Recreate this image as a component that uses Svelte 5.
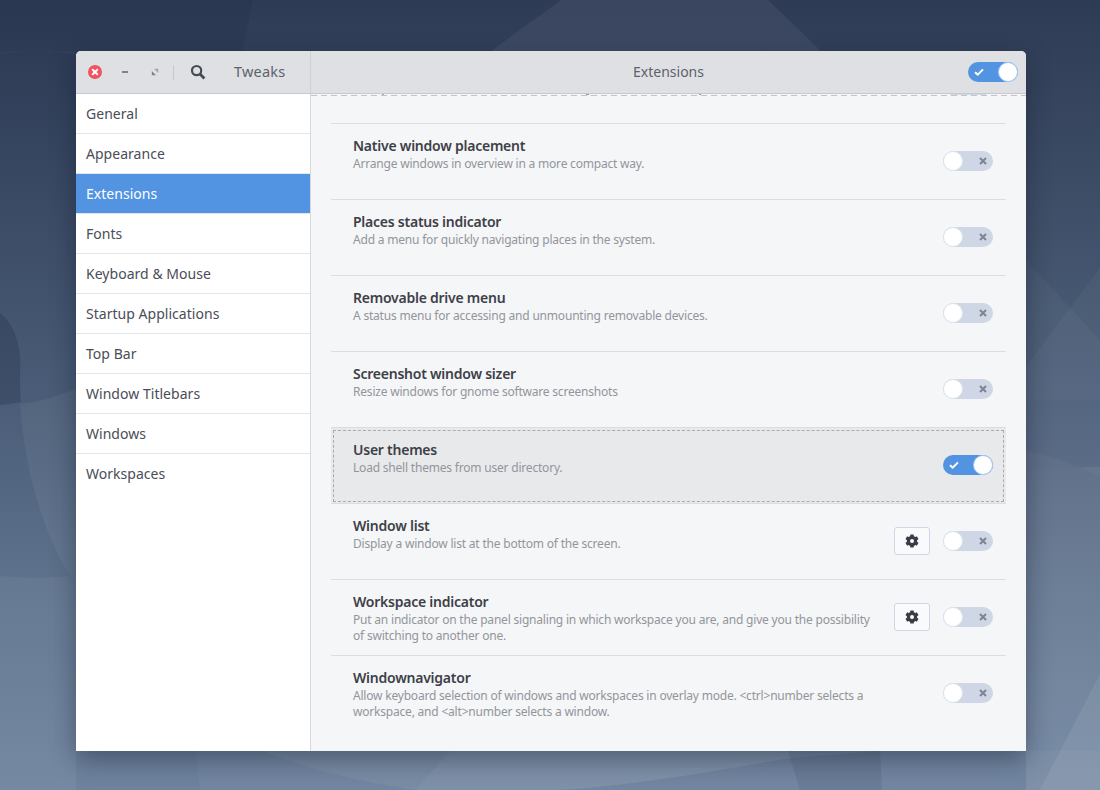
<script>
  const nav = ['General','Appearance','Extensions','Fonts','Keyboard & Mouse','Startup Applications','Top Bar','Window Titlebars','Windows','Workspaces'];
  const rows = [
    { t:'Native window placement', d:'Arrange windows in overview in a more compact way.' },
    { t:'Places status indicator', d:'Add a menu for quickly navigating places in the system.' },
    { t:'Removable drive menu', d:'A status menu for accessing and unmounting removable devices.' },
    { t:'Screenshot window sizer', d:'Resize windows for gnome software screenshots' },
    { t:'User themes', d:'Load shell themes from user directory.', on:true, focus:true },
    { t:'Window list', d:'Display a window list at the bottom of the screen.', gear:true },
    { t:'Workspace indicator', d:'Put an indicator on the panel signaling in which workspace you are, and give you the possibility of switching to another one.', gear:true },
    { t:'Windownavigator', d:'Allow keyboard selection of windows and workspaces in overlay mode. <ctrl>number selects a workspace, and <alt>number selects a window.', last:true }
  ];
</script>

{#snippet toggle(on)}
  <span class="switch" class:on>
    {#if on}
      <svg class="mark" width="10" height="8" viewBox="0 0 10 8"><path d="M1 4.200 3.700 6.600 9 1.400" fill="none" stroke="#fff" stroke-width="2"/></svg>
    {:else}
      <svg class="mark" width="8" height="8" viewBox="0 0 8 8"><path d="M1 1 7 7M7 1 1 7" fill="none" stroke="#7f8491" stroke-width="2"/></svg>
    {/if}
    <span class="knob"></span>
  </span>
{/snippet}

<div class="desktop">
  <svg class="wall" width="1100" height="790" viewBox="0 0 1100 790">
    <defs>
      <linearGradient id="bg" x1="0" y1="0" x2="0" y2="1">
        <stop offset="0" stop-color="#2a3751"/>
        <stop offset="0.5" stop-color="#4a5c77"/>
        <stop offset="0.75" stop-color="#5f738e"/>
        <stop offset="1" stop-color="#6f839e"/>
      </linearGradient>
    </defs>
    <rect width="1100" height="790" fill="url(#bg)"/>
    <!-- top facets -->
    <path d="M253 0 242 51 240 400H1100V0Z" fill="#fff" opacity=".025"/>
    <path d="M561 0H768L821 51H491Z" fill="#fff" opacity=".055"/>
    <path d="M0 55C20 50 50 50 76 55V51H0Z" fill="#fff" opacity=".02"/>
    <!-- left blob and curves -->
    <path d="M0 313C16 325 22 350 20 375C20 385 20 395 21 402C10 404 5 405 0 405Z" fill="#1f2c45" opacity=".28"/>
    <path d="M20 404C40 402 60 395 76 389V585C50 550 25 480 20 404Z" fill="#fff" opacity=".05"/>
    <path d="M0 576C30 578 50 578 68 576L76 585V790H0Z" fill="#fff" opacity=".05"/>
    <!-- right facets -->
    <path d="M1026 260 1100 340V790H1026Z" fill="#fff" opacity=".03"/>
    <path d="M1026 367 1100 268V790H1026Z" fill="#fff" opacity=".03"/>
    <path d="M1026 471C1050 468 1080 467 1100 467V790H1026Z" fill="#fff" opacity=".035"/>
    <path d="M1026 451C1055 456 1080 468 1100 476V467C1080 467 1050 468 1026 471Z" fill="#fff" opacity=".03"/>
    <path d="M1100 674 1040 790H1100Z" fill="#fff" opacity=".07"/>
    <!-- bottom facets -->
    <path d="M196 751 200 790H1100V751Z" fill="#fff" opacity=".03"/>
    <path d="M263 751C310 770 360 782 415 790L450 751Z" fill="#fff" opacity=".05"/>
    <path d="M450 751 415 790H560C640 785 720 770 790 758L788 751Z" fill="#fff" opacity=".09"/>
    <path d="M790 758 880 751 882 790H800Z" fill="#1f2c45" opacity=".1"/>
  </svg>

  <div class="window">
    <header>
      <div class="head-left">
        <span class="close">
          <svg width="8" height="8" viewBox="0 0 8 8"><path d="M1.200 1.200 6.800 6.800M6.800 1.200 1.200 6.800" stroke="#fff" stroke-width="2"/></svg>
        </span>
        <span class="min"></span>
        <svg class="max" width="8" height="8" viewBox="0 0 8 8"><path d="M3 .8H7.200V5Z" fill="#a2a5ac"/><path d="M.8 3V7.200H5Z" fill="#808389"/></svg>
        <span class="sep"></span>
        <svg class="search" width="16" height="16" viewBox="0 0 16 16"><circle cx="6.600" cy="6.600" r="4.600" fill="none" stroke="#474b55" stroke-width="2.200"/><path d="M10 10 14.400 14.400" stroke="#474b55" stroke-width="2.800"/></svg>
        <span class="app">Tweaks</span>
      </div>
      <div class="head-right">
        <span class="title">Extensions</span>
        <span class="head-toggle">{@render toggle(true)}</span>
      </div>
    </header>
    <div class="body">
      <nav>
        {#each nav as n, i}
          <div class="nav-item" class:active={n === 'Extensions'} class:end={i === nav.length - 1}>{n}</div>
        {/each}
      </nav>
      <main>
        <div class="dash"></div>
        <div class="list">
          {#each rows as r}
            <div class="row" class:focus={r.focus} class:last={r.last}>
              <div class="text">
                <div class="name">{r.t}</div>
                <div class="desc">{r.d}</div>
              </div>
              {#if r.gear}
                <span class="gear">
                  <svg width="14" height="14" viewBox="0 0 14 14">
                    <g fill="#3a3d46">
                      <circle cx="7" cy="7" r="5.200"/>
                      <rect x="5.200" y=".4" width="3.600" height="13.200" rx=".6"/>
                      <rect x="5.200" y=".4" width="3.600" height="13.200" rx=".6" transform="rotate(60 7 7)"/>
                      <rect x="5.200" y=".4" width="3.600" height="13.200" rx=".6" transform="rotate(120 7 7)"/>
                    </g>
                    <circle cx="7" cy="7" r="2" fill="#f9fafb"/>
                  </svg>
                </span>
              {/if}
              {@render toggle(r.on)}
            </div>
          {/each}
        </div>
      </main>
    </div>
  </div>
</div>

<style>
  :global(body) { margin: 0; }
  .desktop {
    position: relative;
    width: 1100px;
    height: 790px;
    overflow: hidden;
    padding: 51px 0 0 76px;
    box-sizing: border-box;
    font-family: "Noto Sans", "Open Sans", sans-serif;
  }
  .wall { position: absolute; inset: 0; }
  .window {
    position: relative;
    width: 950px;
    height: 700px;
    border-radius: 5px 5px 0 0;
    overflow: hidden;
    background: #f5f6f7;
    box-shadow: 0 8px 26px rgba(15, 24, 40, .42);
    display: flex;
    flex-direction: column;
  }
  header {
    height: 42px;
    flex: none;
    display: flex;
    background: #dfe0e4;
    border-bottom: 1px solid #c9cad0;
  }
  .head-left {
    width: 234px;
    flex: none;
    display: flex;
    align-items: center;
    border-right: 1px solid #cfd0d5;
  }
  .close {
    width: 14px; height: 14px;
    margin-left: 12px;
    border-radius: 50%;
    background: #f0535f;
    display: flex; align-items: center; justify-content: center;
  }
  .min { width: 6px; height: 2px; background: #7f828a; margin-left: 20px; }
  .max { margin-left: 23px; }
  .sep { width: 1px; height: 15px; background: #c6c7cd; margin-left: 14px; }
  .search { margin-left: 16px; }
  .app { font-size: 14.5px; letter-spacing: .2px; color: #5d616c; margin: -2px 0 0 28px; }
  .head-right {
    flex: 1;
    position: relative;
    display: flex;
    align-items: center;
    justify-content: center;
  }
  .title { font-size: 14px; color: #5d616c; margin: -2px 0 0 0; }
  .head-toggle { position: absolute; right: 8px; top: 11px; display: flex; }
  .body { flex: 1; display: flex; min-height: 0; }
  nav {
    width: 234px;
    flex: none;
    background: #fff;
    border-right: 1px solid #d8d9dd;
  }
  .nav-item {
    height: 39px;
    line-height: 39px;
    padding-left: 10px;
    font-size: 14px;
    letter-spacing: .03px;
    color: #4a4d57;
    border-bottom: 1px solid #e4e5e8;
  }
  .nav-item.active { background: #5294e2; color: #fff; }
  .nav-item.end { border-bottom: none; }
  main { flex: 1; min-width: 0; overflow: hidden; }
  .dash {
    height: 2px;
    background:
      linear-gradient(#cfd6e6, #cfd6e6) 639px 0 / 36px 1px no-repeat,
      linear-gradient(#aaa, #aaa) 71px 0 / 2px 1px no-repeat,
      linear-gradient(#999, #999) 275px 0 / 3px 1px no-repeat,
      linear-gradient(#999, #999) 388px 0 / 2px 1px no-repeat,
      repeating-linear-gradient(90deg, #c3c5c9 0 6px, transparent 6px 10px) 0 1px / 100% 1px no-repeat;
  }
  .list {
    margin: 27px 20px 0;
    border-top: 1px solid #dcdde1;
  }
  .row {
    height: 75px;
    border-bottom: 1px solid #dcdde1;
    padding: 0 13px 0 22px;
    display: flex;
    align-items: flex-start;
    position: relative;
  }
  .row.last { border-bottom: none; }
  .row.focus {
    background: #e8e9eb;
    outline: 1px dashed #a9abb0;
    outline-offset: -3px;
  }
  .text { flex: 1; width: 0; padding-top: 11px; padding-right: 12px; }
  .name { font-size: 14px; line-height: 21px; font-weight: 600; letter-spacing: -.24px; color: #3d4048; }
  .desc { font-size: 12px; line-height: 16px; letter-spacing: -.2px; color: #92959c; max-width: 522px; }
  .gear {
    width: 34px; height: 26px;
    margin: 23px 13px 0 0;
    border: 1px solid #cfd6e6;
    border-radius: 3px;
    background: #f9fafb;
    display: flex; align-items: center; justify-content: center;
    flex: none;
  }
  .switch {
    width: 50px; height: 20px;
    margin-top: 27px;
    border-radius: 10px;
    background: #cfd6e6;
    position: relative;
    flex: none;
    display: block;
  }
  .head-toggle .switch { margin-top: 0; }
  .switch.on { background: #5294e2; }
  .knob {
    position: absolute;
    left: 0; top: 0;
    width: 20px; height: 20px;
    box-sizing: border-box;
    border-radius: 50%;
    background: #fff;
    border: 1px solid #dfe3ee;
  }
  .switch.on .knob { left: 30px; border-color: #a9c9f0; }
  .mark { position: absolute; top: 6px; left: 36px; }
  .switch.on .mark { left: 6px; }
</style>
